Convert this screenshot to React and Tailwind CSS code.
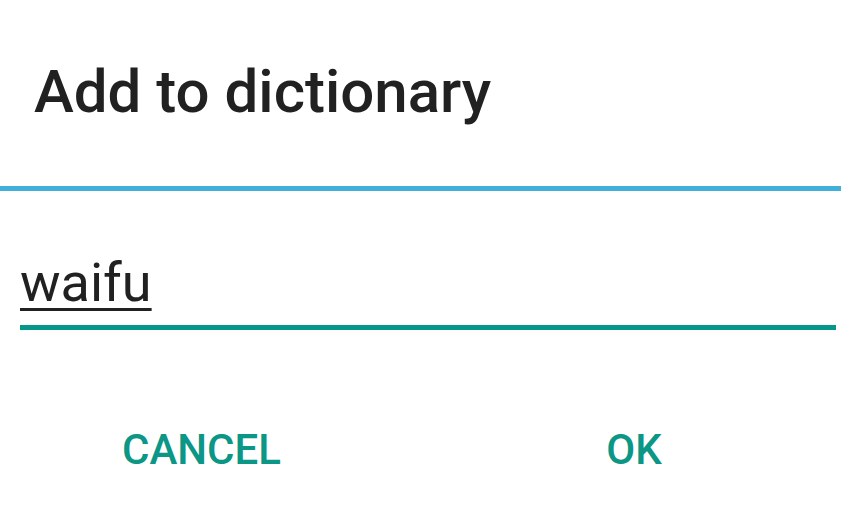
export default function App() {
  return (
    <div className="w-[841px] h-[520px] bg-white overflow-hidden" style={{ fontFamily: 'Roboto, "Noto Sans", sans-serif' }}>
      {/* Title */}
      <div className="h-[186px] pl-[34px] pt-[52px]">
        <h1 className="text-[60px] leading-[80px] font-medium text-[#212121]">Add to dictionary</h1>
      </div>
      <div className="h-[5px] bg-[#40b0db]" />

      {/* Input */}
      <div className="pl-[20px] pr-[5px] pt-[62px]">
        <div className="text-[54px] leading-[60px] text-[#212121] underline decoration-[3px] underline-offset-[7px]">waifu</div>
        <div className="mt-[12px] h-[5px] bg-[#05978a]" />
      </div>

      {/* Buttons */}
      <div className="flex pt-[99px]">
        <div className="w-[403px] flex justify-center">
          <span className="text-[42px] leading-[42px] font-medium text-[#0b9686]">CANCEL</span>
        </div>
        <div className="flex-1 flex justify-center pl-[24px]">
          <span className="text-[42px] leading-[42px] font-medium text-[#0b9686]">OK</span>
        </div>
      </div>
    </div>
  )
}
